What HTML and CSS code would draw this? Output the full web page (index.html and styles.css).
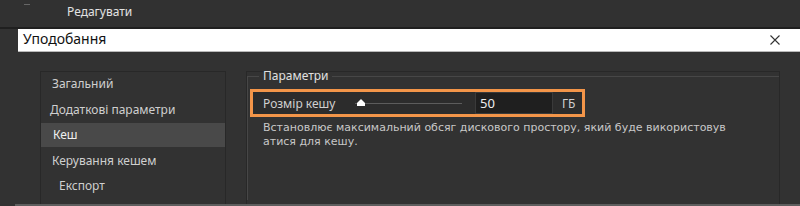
FILE: index.html
```html
<!DOCTYPE html>
<html lang="uk">
<head>
<meta charset="utf-8">
<link rel="stylesheet" href="styles.css">
</head>
<body>
<div class="menubar"><span class="dash"></span><span class="menu-item">Редагувати</span></div>
<div class="titlebar">
  <span class="title">Уподобання</span>
  <svg class="close" width="12" height="12" viewBox="0 0 12 12"><path d="M1.5 1.5 L10.5 10.5 M10.5 1.5 L1.5 10.5" stroke="#333" stroke-width="1.1" fill="none"/></svg>
</div>
<div class="content">
  <div class="sidebar">
    <div class="item i1">Загальний</div>
    <div class="item i2">Додаткові параметри</div>
    <div class="item i3 active">Кеш</div>
    <div class="item i4">Керування кешем</div>
    <div class="item i5">Експорт</div>
  </div>
  <div class="main">
    <fieldset class="group">
      <legend>Параметри</legend>
      <div class="row">
        <span class="label">Розмір кешу</span>
        <div class="slider"><span class="track"></span><span class="thumb"></span></div>
        <div class="field">50</div>
        <span class="unit">ГБ</span>
      </div>
      <div class="desc">
        <div class="line">Встановлює максимальний обсяг дискового простору, який буде використовув</div>
        <div class="line">атися для кешу.</div>
      </div>
    </fieldset>
  </div>
</div>
<div class="bottom"></div>
</body>
</html>
```
FILE: styles.css
```css
html, body { margin: 0; padding: 0; }
body {
  width: 800px; height: 206px; overflow: hidden;
  background: #323232;
  font-family: "Noto Sans", "DejaVu Sans", sans-serif;
  font-size: 12px; color: #d6d6d6;
  position: relative;
}
.menubar {
  height: 27px; background: #313131;
  border-bottom: 2px solid #1f1f1f;
  display: flex; align-items: center;
  position: relative;
}
.dash { position: absolute; left: 24px; top: 4px; width: 6px; height: 1px; background: #666; }
.menu-item { margin-left: 67px; color: #e2e2e2; font-size: 12px; margin-top: -5px; }
.titlebar {
  margin-left: 18px; height: 22px; background: #fff;
  border-bottom: 1px solid #b9b9b9;
  display: flex; align-items: center; justify-content: space-between;
}
.title { color: #111; font-size: 14px; padding-left: 5px; margin-top: -3px; }
.close { margin-right: 19px; }
.content {
  display: flex; padding-left: 40px; padding-top: 19px;
  height: 134px; overflow: hidden;
}
.sidebar {
  width: 184px; border: 1px solid #282828; border-bottom: none;
}
.item { height: 25px; line-height: 25px; color: #cfcfcf; }
.i1 { padding-left: 11px; line-height: 24px; }
.i2 { padding-left: 9px; }
.i3 { padding-left: 12px; }
.i4 { padding-left: 11px; }
.i5 { padding-left: 18px; }
.active { background: #494949; color: #f0f0f0; height: 24px; line-height: 24px; margin-top: 1px; margin-bottom: 1px; }
.main {
  margin-left: 20px; width: 532px;
  border: 1px solid #282828; border-bottom: none;
}
.group {
  margin: 0; margin-top: -3px; padding: 0 0 0 1px;
  border: 1px solid #474747; border-right: none; border-bottom: none;
  min-width: 0; height: 130px;
}
.group legend {
  padding: 0 4px; margin-left: 10px;
  color: #e0e0e0; font-size: 12px; line-height: 14px;
}
.row {
  margin-top: 6px; margin-left: 1px;
  width: 329px; height: 22px;
  border: 3px solid #f39549;
  background: #2c2c2c;
  display: flex; align-items: center;
}
.label { padding-left: 10px; width: 92px; color: #d0d0d0; }
.slider { position: relative; width: 107px; height: 12px; }
.track { position: absolute; left: 0; right: 0; top: 6px; height: 1px; background: #5c5c5c; }
.thumb {
  position: absolute; left: 2px; top: 2px;
  width: 0; height: 0;
  border-left: 4px solid transparent; border-right: 4px solid transparent;
  border-bottom: 4px solid #fff;
}
.thumb::after { content: ""; position: absolute; left: -4px; top: 4px; width: 8px; height: 3px; background: #fff; }
.field {
  margin-left: 13px; width: 72px; height: 20px; line-height: 20px;
  background: #1f1f1f; border: 1px solid #3a3a3a;
  padding-left: 4px; color: #eee; font-size: 13px;
}
.unit { margin-left: 9px; color: #d0d0d0; }
.desc { margin: 4px 0 0 14px; color: #c8c8c8; }
.line { height: 14px; line-height: 14px; font-size: 11px; font-family: "DejaVu Sans", sans-serif; }
.bottom {
  position: absolute; left: 15px; right: 0; bottom: 0; height: 2px; background: #5e5e5e;
}
```
